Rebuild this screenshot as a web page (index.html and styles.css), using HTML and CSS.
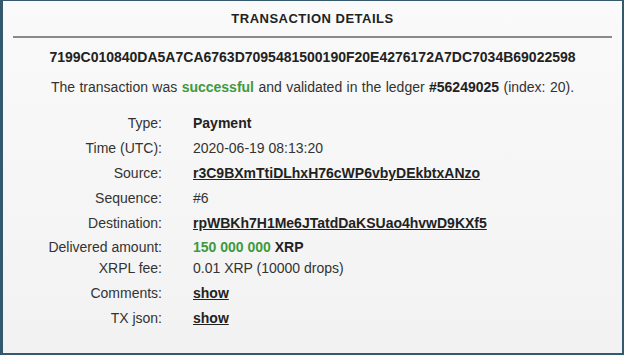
FILE: index.html
```html
<!DOCTYPE html>
<html lang="en">
<head>
    <meta charset="UTF-8">
    <title>Transaction Details</title>
    <link rel="stylesheet" href="styles.css">
</head>
<body>
    <div class="frame">
        <div class="panel">
            <h1 class="title">TRANSACTION DETAILS</h1>
            <div class="hash">7199C010840DA5A7CA6763D7095481500190F20E4276172A7DC7034B69022598</div>
            <p class="status">The transaction was <b class="green">successful</b> and validated in the ledger <b>#56249025</b> (index: 20).</p>

            <div class="details">
                <div class="label">Type:</div>
                <div class="value"><b>Payment</b></div>

                <div class="label">Time (UTC):</div>
                <div class="value">2020-06-19 08:13:20</div>

                <div class="label">Source:</div>
                <div class="value"><a href="#">r3C9BXmTtiDLhxH76cWP6vbyDEkbtxANzo</a></div>

                <div class="label">Sequence:</div>
                <div class="value">#6</div>

                <div class="label">Destination:</div>
                <div class="value"><a href="#">rpWBKh7H1Me6JTatdDaKSUao4hvwD9KXf5</a></div>

                <div class="label">Delivered amount:</div>
                <div class="value"><b class="green">150 000 000</b> <b>XRP</b></div>

                <div class="label">XRPL fee:</div>
                <div class="value">0.01 XRP (10000 drops)</div>

                <div class="label">Comments:</div>
                <div class="value"><a href="#">show</a></div>

                <div class="label">TX json:</div>
                <div class="value"><a href="#">show</a></div>
            </div>
        </div>
    </div>
</body>
</html>
```

FILE: styles.css
```css
html, body {
    margin: 0;
    height: 100%;
}
body {
    font-family: "Liberation Sans", Arial, sans-serif;
    font-size: 14px;
    color: #333;
    background-color: #34596e;
}
.frame {
    box-sizing: border-box;
    height: 100%;
    padding: 1px 2px 2px 3px;
}
.panel {
    height: 100%;
    background: linear-gradient(#fafafa, #f2f2f2);
    padding: 0 10px 0 10px;
}
.title {
    margin: 0;
    padding-top: 10px;
    padding-bottom: 9px;
    border-bottom: 2px solid #8a8a8a;
    text-align: center;
    font-size: 13px;
    line-height: 16px;
    letter-spacing: 0.5px;
    font-weight: bold;
    color: #222;
}
.hash {
    margin-top: 11px;
    text-align: center;
    font-weight: bold;
    font-size: 14px;
    line-height: 16px;
    color: #222;
}
.status {
    margin: 14px 0 0 0;
    text-align: center;
    line-height: 16px;
    word-spacing: 0.5px;
}
b {
    color: #222;
}
b.green {
    color: #3e9a3e;
}
.details {
    margin-top: 20px;
    display: grid;
    grid-template-columns: 149px auto;
    column-gap: 31px;
    grid-template-rows: 25px 25px 25px 25px 24px 21px 25px 25px 25px;
}
.label {
    text-align: right;
    line-height: 16px;
}
.value {
    line-height: 16px;
}
.value a {
    color: #222;
    font-weight: bold;
    text-decoration: underline;
}
```
